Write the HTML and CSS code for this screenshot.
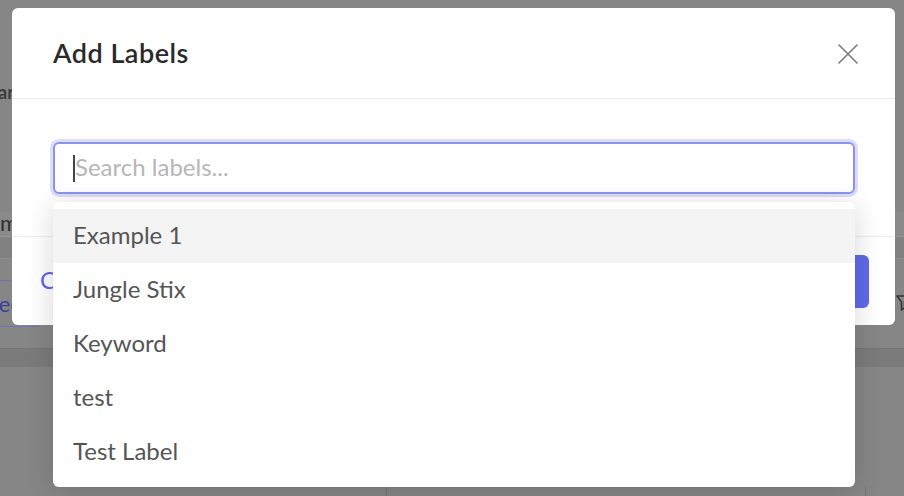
FILE: index.html
```html
<!DOCTYPE html>
<html lang="en">
<head>
<meta charset="utf-8">
<title>Add Labels</title>
<link rel="stylesheet" href="styles.css">
</head>
<body>
<div class="page">
  <div class="bg-gap-top"></div>
  <div class="bg-ar">ar</div>
  <div class="bg-gap-mid"></div>
  <div class="bg-row-m">m</div>
  <div class="bg-row-strip"></div>
  <div class="bg-row-actions">
    <div class="bg-see">See</div>
    <svg class="bg-funnel" width="14" height="16" viewBox="0 0 14 16"><path d="M1 1h12l-4.5 6v6l-3 2V7z" fill="none" stroke="#333" stroke-width="1.5" stroke-linejoin="round"/></svg>
  </div>
  <div class="bg-band"></div>
  <div class="bg-table">
    <div class="bg-table-top"></div>
    <div class="bg-table-row">
      <div class="bg-col bg-col-a"></div>
      <div class="bg-col bg-col-b"></div>
      <div class="bg-col bg-col-c"></div>
    </div>
  </div>

  <div class="modal">
    <div class="modal-header">
      <h2 class="modal-title">Add Labels</h2>
      <svg class="close" width="20" height="20" viewBox="0 0 20 20"><path d="M1 1L19 19M19 1L1 19" stroke="#7a7a7a" stroke-width="1.6" stroke-linecap="round"/></svg>
    </div>
    <div class="modal-body">
      <div class="search-wrap">
        <div class="search"><span class="caret"></span><span class="placeholder">Search labels...</span></div>
        <ul class="dropdown">
          <li class="option active">Example 1</li>
          <li class="option">Jungle Stix</li>
          <li class="option">Keyword</li>
          <li class="option">test</li>
          <li class="option">Test Label</li>
        </ul>
      </div>
    </div>
    <div class="modal-footer">
      <span class="cancel">Cancel</span>
      <span class="primary">Add</span>
    </div>
  </div>
</div>
</body>
</html>
```

FILE: styles.css
```css
* { box-sizing: border-box; }
html, body { margin: 0; padding: 0; }
body {
  font-family: "Lato", "Noto Sans", sans-serif;
  background: #858585;
}
.page {
  position: relative;
  width: 904px;
  height: 496px;
  overflow: hidden;
  background: #868686;
  display: flex;
  flex-direction: column;
}
.bg-gap-top { height: 82px; flex: none; }
.bg-ar {
  height: 20px;
  flex: none;
  line-height: 20px;
  font-size: 18px;
  font-weight: 700;
  color: #3c3c3c;
  margin-left: -2px;
}
.bg-gap-mid { height: 110px; flex: none; }
.bg-row-m {
  height: 25px;
  flex: none;
  background: #8a8a8a;
  font-size: 22px;
  line-height: 22px;
  color: #2d2d2d;
  border-bottom: 1px solid #979797;
}
.bg-row-strip {
  height: 22px;
  flex: none;
  background: #818181;
  border-bottom: 1px solid #8e8e8e;
}
.bg-row-actions {
  height: 89px;
  flex: none;
  display: flex;
  align-items: flex-start;
  justify-content: space-between;
  padding-top: 21px;
}
.bg-see {
  height: 47px;
  width: 100px;
  margin-left: -60px;
  border: 1px solid #6f73b0;
  border-radius: 4px;
  color: #3c3f9a;
  font-size: 22px;
  line-height: 45px;
  padding-left: 46px;
  white-space: nowrap;
}
.bg-funnel { margin-top: 15px; margin-right: -6px; }
.bg-band {
  height: 19px;
  flex: none;
  background: #7b7b7b;
  border-top: 1px solid #747474;
}
.bg-table {
  flex: 1;
  display: flex;
  flex-direction: column;
}
.bg-table-top { flex: 1; }
.bg-table-row { height: 10px; display: flex; }
.bg-col-a { width: 386px; }
.bg-col-b { width: 479px; border-left: 1px solid #767676; }
.bg-col-c { flex: 1; border-left: 1px solid #767676; }

.modal {
  position: absolute;
  left: 12px;
  top: 8px;
  width: 883px;
  height: 317px;
  background: #fff;
  border-radius: 6px;
  display: flex;
  flex-direction: column;
}
.modal-header {
  height: 91px;
  flex: none;
  display: flex;
  align-items: center;
  justify-content: space-between;
  padding: 0 37px 0 41px;
  border-bottom: 1px solid #ececec;
}
.modal-title {
  margin: 0;
  font-size: 27px;
  font-weight: 600;
  color: #2a2a2a;
  line-height: 32px;
  letter-spacing: 0.5px;
}
.close { display: block; margin-top: 2px; }
.modal-body {
  height: 137px;
  flex: none;
  padding: 43px 40px 0 41px;
}
.search-wrap { position: relative; }
.search {
  height: 52px;
  border: 2px solid #8b93ef;
  border-radius: 6px;
  box-shadow: 0 0 0 3px #dddcf9;
  display: flex;
  align-items: center;
  padding-left: 18px;
  padding-bottom: 3px;
}
.caret {
  width: 2px;
  height: 27px;
  background: #444;
  margin-top: 3px;
}
.placeholder {
  font-size: 24px;
  color: #b6b6b6;
}
.dropdown {
  position: absolute;
  left: 0;
  right: 0;
  top: 60px;
  margin: 0;
  padding: 7px 0 8px;
  list-style: none;
  background: #fff;
  border-radius: 6px;
  box-shadow: 0 4px 28px rgba(0, 0, 0, 0.16);
  z-index: 2;
}
.option {
  height: 54px;
  display: flex;
  align-items: center;
  padding-left: 20px;
  padding-bottom: 3px;
  font-size: 24px;
  color: #555;
}
.option.active { background: #f4f4f4; }
.modal-footer {
  flex: 1;
  border-top: 1px solid #ececec;
  display: flex;
  align-items: center;
  justify-content: space-between;
  padding: 0 26px 0 28px;
}
.cancel {
  font-size: 24px;
  color: #5d68e6;
  padding-bottom: 3px;
}
.primary {
  width: 110px;
  height: 53px;
  border-radius: 6px;
  background: #5f6ae9;
  color: #fff;
  font-size: 22px;
  display: flex;
  align-items: center;
  justify-content: center;
}
```
